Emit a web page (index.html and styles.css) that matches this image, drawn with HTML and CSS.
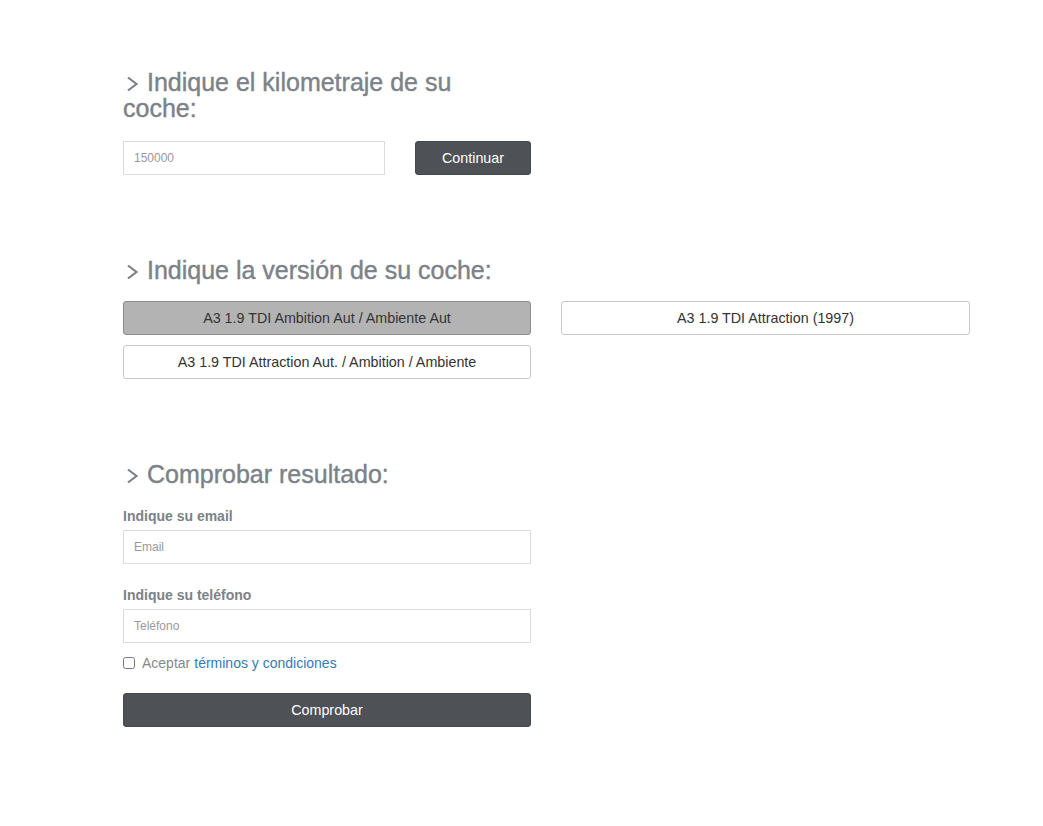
FILE: index.html
```html
<!DOCTYPE html>
<html lang="es">
<head>
<meta charset="utf-8">
<title>Tasación</title>
<link rel="stylesheet" href="styles.css">
</head>
<body>
<main class="container">
  <section class="step step-km">
    <h2 class="step-title"><span class="chev"><svg width="12" height="16" viewBox="0 0 12 16"><path d="M2 1.5 L10.5 8 L2 14.5" fill="none" stroke="currentColor" stroke-width="2.2"/></svg></span>Indique el kilometraje de su coche:</h2>
    <div class="km-row">
      <input class="field field-km" type="text" placeholder="150000">
      <button class="btn btn-dark btn-continue" type="button">Continuar</button>
    </div>
  </section>

  <section class="step step-version">
    <h2 class="step-title"><span class="chev"><svg width="12" height="16" viewBox="0 0 12 16"><path d="M2 1.5 L10.5 8 L2 14.5" fill="none" stroke="currentColor" stroke-width="2.2"/></svg></span>Indique la versión de su coche:</h2>
    <div class="version-grid">
      <button class="btn-version is-selected" type="button">A3 1.9 TDI Ambition Aut / Ambiente Aut</button>
      <button class="btn-version" type="button">A3 1.9 TDI Attraction (1997)</button>
      <button class="btn-version" type="button">A3 1.9 TDI Attraction Aut. / Ambition / Ambiente</button>
    </div>
  </section>

  <section class="step step-result">
    <h2 class="step-title"><span class="chev"><svg width="12" height="16" viewBox="0 0 12 16"><path d="M2 1.5 L10.5 8 L2 14.5" fill="none" stroke="currentColor" stroke-width="2.2"/></svg></span>Comprobar resultado:</h2>
    <form class="result-form">
      <label class="form-label" for="email">Indique su email</label>
      <input class="field" id="email" type="text" placeholder="Email">
      <label class="form-label label-phone" for="phone">Indique su teléfono</label>
      <input class="field" id="phone" type="text" placeholder="Teléfono">
      <label class="check-row"><input type="checkbox" class="check"> Aceptar <a href="#" class="link">términos y condiciones</a></label>
      <button class="btn btn-dark btn-block" type="button">Comprobar</button>
    </form>
  </section>
</main>
</body>
</html>
```

FILE: styles.css
```css
* { box-sizing: border-box; }
html, body { margin: 0; padding: 0; background: #fff; }
body {
  font-family: "Liberation Sans", Arial, Helvetica, sans-serif;
  color: #333;
  font-size: 14px;
}
.container {
  width: 847px;
  margin-left: 123px;
  padding-top: 69px;
}
.step { width: 408px; }
.step-version { width: 847px; margin-top: 82px; }
.step-result { width: 408px; margin-top: 82px; }

.step-title {
  margin: 0;
  max-width: 400px;
  font-size: 25px;
  line-height: 26px;
  font-weight: 400;
  color: #7b8288;
  -webkit-text-stroke: 0.4px #7b8288;
}
.chev {
  display: inline-block;
  width: 24px;
  padding-left: 3px;
  vertical-align: -1px;
}
.chev svg { display: block; }

.km-row {
  display: flex;
  gap: 30px;
  margin-top: 20px;
}
.field {
  display: block;
  height: 34px;
  width: 100%;
  border: 1px solid #dcdcdc;
  border-radius: 0;
  padding: 0 10px;
  font-family: inherit;
  font-size: 12px;
  color: #555;
  background: #fff;
  outline: none;
}
.field::placeholder { color: #999; }
.field-km { width: 262px; flex: none; }

.btn {
  font-family: inherit;
  font-size: 14.3px;
  height: 34px;
  border-radius: 3px;
  cursor: pointer;
}
.btn-dark {
  background: #4e5156;
  border: 1px solid #45484c;
  color: #fff;
}
.btn-continue { width: 116px; flex: none; }
.btn-block { display: block; width: 100%; margin-top: 22px; }

.version-grid {
  display: grid;
  grid-template-columns: 408px 409px;
  column-gap: 30px;
  row-gap: 10px;
  margin-top: 18px;
}
.btn-version {
  height: 34px;
  font-family: inherit;
  font-size: 14.3px;
  color: #333;
  background: #fff;
  border: 1px solid #c8c8c8;
  border-radius: 3px;
  padding: 0 10px;
  cursor: pointer;
}
.btn-version.is-selected {
  background: #b3b3b3;
  border-color: #8c8c8c;
}

.result-form { margin-top: 21px; }
.form-label {
  display: block;
  font-weight: 700;
  font-size: 14px;
  color: #7b8288;
  margin-bottom: 6px;
  line-height: 16px;
}
.label-phone { margin-top: 23px; }
.check-row {
  display: flex;
  align-items: center;
  margin-top: 12px;
  font-size: 14px;
  color: #888;
  line-height: 16px;
}
.check {
  margin: 0 7px 0 0;
  width: 12px;
  height: 12px;
}
.link { color: #337ab7; text-decoration: none; margin-left: 4px; }
```
